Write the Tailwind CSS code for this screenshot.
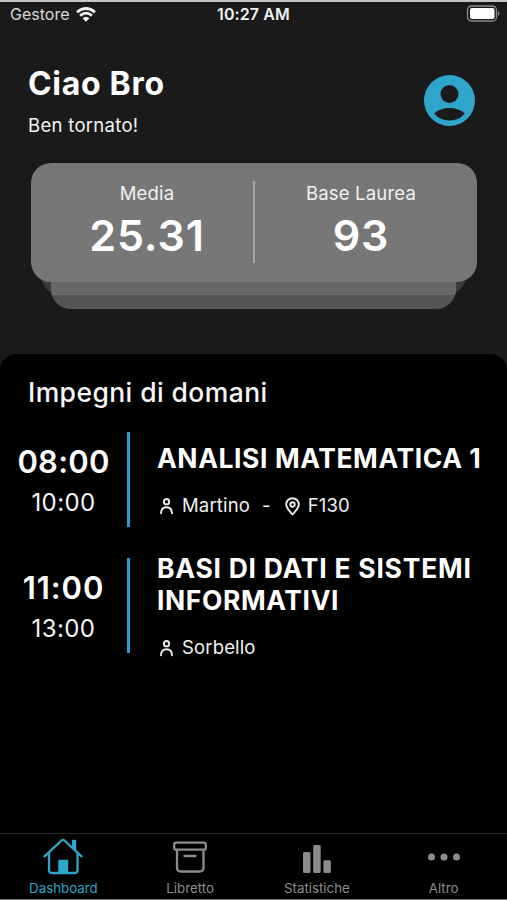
<!DOCTYPE html>
<html lang="it">
<head>
<meta charset="utf-8">
<meta name="viewport" content="width=device-width, initial-scale=1">
<title>Dashboard</title>
<script src="https://cdn.jsdelivr.net/npm/@tailwindcss/browser@4"></script>
</head>
<body class="bg-[#1a1a1a]">
<div class="flex h-[900px] w-[507px] flex-col overflow-hidden border-t-2 border-[#c4c6c6] bg-[#1a1a1a] font-['Inter','Liberation_Sans',sans-serif] text-white whitespace-nowrap">
  <header class="grid h-[25px] shrink-0 grid-cols-3 items-center pl-[10px] pr-[7px]">
    <div class="flex items-center gap-[7px]">
      <span class="-mt-[2px] text-[16px] text-[#d8d8d8]">Gestore</span>
      <svg class="-mt-px h-[15px] w-[20px]" viewBox="0 0 20 15" fill="none" stroke="#f4f4f4" stroke-width="2.7"><path d="M1 5.3Q10-2.3 19 5.3M4.1 8.6Q10 3.7 15.900 8.600"/><path d="M6.500 11.200Q10 8.100 13.500 11.200L10 14.700Z" fill="#f4f4f4" stroke="none"/></svg>
    </div>
    <span class="-mt-[2px] -ml-[3px] text-center text-[16px] font-semibold tracking-[0.1px] text-[#f0f0f0]">10:27 AM</span>
    <svg class="-mt-[2px] h-[17px] w-[34px] justify-self-end" viewBox="0 0 34 17"><rect x="1.500" y="1" width="29" height="15" rx="4" fill="none" stroke="#8b8b8b" stroke-width="1.3"/><rect x="4" y="3" width="24.500" height="11" rx="2" fill="#fff"/><path d="M32 6.200Q33.500 7 33.500 8.500T32 10.800Z" fill="#8b8b8b"/></svg>
  </header>

  <section class="flex h-[136px] shrink-0 items-start justify-between pl-[28px] pr-[32px]">
    <div class="pt-[37px]">
      <h1 class="text-[32px] leading-[40px] font-bold tracking-[0.7px]">Ciao Bro</h1>
      <p class="mt-[8px] text-[18.500px] leading-[26px] tracking-[0.3px] text-[#f4f4f4]">Ben tornato!</p>
    </div>
    <svg class="mt-[48px] size-[51px]" viewBox="0 0 51 51"><circle cx="25.500" cy="25.500" r="25.500" fill="#2fa5cc"/><circle cx="25.500" cy="19" r="9" fill="#1a1a1a"/><path d="M10.200 38.500Q16 33 25.500 33T40.800 38.500Q35 45.500 25.500 45.500T10.200 38.500Z" fill="#1a1a1a"/></svg>
  </section>

  <section class="relative mx-[31px] h-[191px] w-[446px] shrink-0">
    <div class="absolute top-[14px] left-[10px] h-[118px] w-[425px] rounded-[20px] bg-[#3a3a3a]"></div>
    <div class="absolute top-[28px] left-[20px] h-[118px] w-[405px] overflow-hidden rounded-[20px] bg-[#555]"><div class="h-[104px] bg-[#686868]"></div></div>
    <div class="absolute inset-x-0 top-0 flex h-[119px] items-center rounded-[20px] bg-[#777]">
      <div class="w-[222px] pl-[10px] text-center">
        <p class="text-[18.500px] leading-[24px] tracking-[0.2px] text-[#f1f1f1]">Media</p>
        <p class="mt-px text-[43px] leading-[58px] font-semibold tracking-[0.900px]">25.31</p>
      </div>
      <div class="-mt-px h-[82px] w-[2px] bg-[#a5a5a5]"></div>
      <div class="w-[222px] pr-[10px] text-center">
        <p class="text-[18.500px] leading-[24px] tracking-[0.2px] text-[#f1f1f1]">Base Laurea</p>
        <p class="mt-px text-[43px] leading-[58px] font-semibold tracking-[0.900px]">93</p>
      </div>
    </div>
  </section>

  <main class="flex h-[479px] shrink-0 flex-col rounded-t-[16px] bg-black">
    <h2 class="mt-[21px] ml-[28px] text-[26.500px] leading-[34px] font-medium tracking-[0.42px] text-[#f7f7f7]">Impegni di domani</h2>
    <article class="mt-[23px] flex h-[95px]">
      <div class="w-[127px] pt-[10px] text-center">
        <p class="text-[31px] leading-[40px] font-semibold tracking-[0.2px]">08:00</p>
        <p class="mt-px text-[24px] leading-[40px] tracking-[0.4px] text-[#f4f4f4]">10:00</p>
      </div>
      <div class="-ml-[0.500px] w-[3.500px] bg-[#2b9bd3]"></div>
      <div class="pt-[10px] pl-[27px]">
        <h3 class="text-[26.500px] leading-[32px] font-bold tracking-[0.580px]">ANALISI MATEMATICA 1</h3>
        <div class="mt-[19px] flex h-[26px] items-center text-[18.500px] tracking-[0.150px] text-[#f2f2f2]">
          <svg class="mr-[9px] ml-[3px] h-[17px] w-[13px]" viewBox="0 0 13 17" fill="none" stroke="#eee" stroke-width="1.900" stroke-linecap="round"><circle cx="6.500" cy="3.700" r="2.700"/><path d="M1 15.300Q1.200 9.300 6.500 9.300T12 15.300"/></svg>
          <span>Martino</span><span class="mr-[14px] ml-[12px]">-</span>
          <svg class="mr-[8px] h-[19px] w-[15px]" viewBox="0 0 15 19" fill="none" stroke="#eee" stroke-width="1.900" stroke-linejoin="round"><path d="M7.500 17.500C5 14.500 1.200 11.500 1.200 7.500a6.300 6.300 0 0 1 12.600 0C13.800 11.500 10 14.500 7.500 17.500Z"/><circle cx="7.500" cy="7.500" r="2.200"/></svg>
          <span>F130</span>
        </div>
      </div>
    </article>
    <article class="mt-[31px] flex h-[95px]">
      <div class="w-[127px] pt-[10px] text-center">
        <p class="text-[31px] leading-[40px] font-semibold tracking-[0.900px]">11:00</p>
        <p class="mt-px text-[24px] leading-[40px] tracking-[0.4px] text-[#f4f4f4]">13:00</p>
      </div>
      <div class="-ml-[0.500px] w-[3.500px] bg-[#2b9bd3]"></div>
      <div class="-mt-[6px] pl-[27px]">
        <h3 class="text-[26.500px] leading-[32px] font-bold tracking-[0.750px]">BASI DI DATI E SISTEMI<br><span class="tracking-[0.600px]">INFORMATIVI</span></h3>
        <div class="mt-[19px] flex h-[26px] items-center text-[18.500px] tracking-[0.150px] text-[#f2f2f2]">
          <svg class="mr-[9px] ml-[3px] h-[17px] w-[13px]" viewBox="0 0 13 17" fill="none" stroke="#eee" stroke-width="1.900" stroke-linecap="round"><circle cx="6.500" cy="3.700" r="2.700"/><path d="M1 15.300Q1.200 9.300 6.500 9.300T12 15.300"/></svg>
          <span>Sorbello</span>
        </div>
      </div>
    </article>
  </main>

  <nav class="grid h-[67px] shrink-0 grid-cols-4 border-t border-b border-t-[#272727] border-b-[#777] bg-black text-[13.300px] leading-[18px] text-[#8c8c8c]">
    <div class="flex flex-col items-center text-[#2fa5cc]">
      <svg class="mt-[4px] h-[38px] w-[40px]" viewBox="0 0 40 38" fill="none" stroke="currentColor" stroke-width="2.300" stroke-linecap="round" stroke-linejoin="round"><path d="M1.500 18.300L18.500 2.500Q20 1.200 21.500 2.500L38.500 18.300M6 15V32Q6 35 9 35H31.500Q34.500 35 34.500 32V15"/><path d="M29.700 2.500H32.500V12L29.700 9ZM16 22.500H24.500V34.500H16Z" fill="currentColor" stroke-width="1.500"/></svg>
      <span class="mt-[3px]">Dashboard</span>
    </div>
    <div class="flex flex-col items-center">
      <svg class="mt-[4px] h-[38px] w-[34px]" viewBox="0 0 34 38" fill="none" stroke="currentColor" stroke-width="2.300" stroke-linecap="round" stroke-linejoin="round"><rect x="1.200" y="4.700" width="31.600" height="7" rx="2"/><path d="M4 12V29.500Q4 33.500 8 33.500H26.500Q30.500 33.500 30.500 29.500V12M11.500 18H22.500"/></svg>
      <span class="mt-[3px]">Libretto</span>
    </div>
    <div class="flex flex-col items-center">
      <svg class="mt-[4px] h-[38px] w-[28px]" viewBox="0 0 28 38" fill="currentColor"><rect y="14" width="7.500" height="21" rx="1.500"/><rect x="10.200" y="7" width="7.500" height="28" rx="1.500"/><rect x="20.400" y="22.300" width="7.500" height="12.700" rx="1.500"/></svg>
      <span class="mt-[3px]">Statistiche</span>
    </div>
    <div class="flex flex-col items-center">
      <svg class="mt-[4px] h-[38px] w-[32px]" viewBox="0 0 32 38" fill="currentColor"><circle cx="3.500" cy="19" r="3.500"/><circle cx="16" cy="19" r="3.500"/><circle cx="28.500" cy="19" r="3.500"/></svg>
      <span class="mt-[3px]">Altro</span>
    </div>
  </nav>
</div>
</body>
</html>
